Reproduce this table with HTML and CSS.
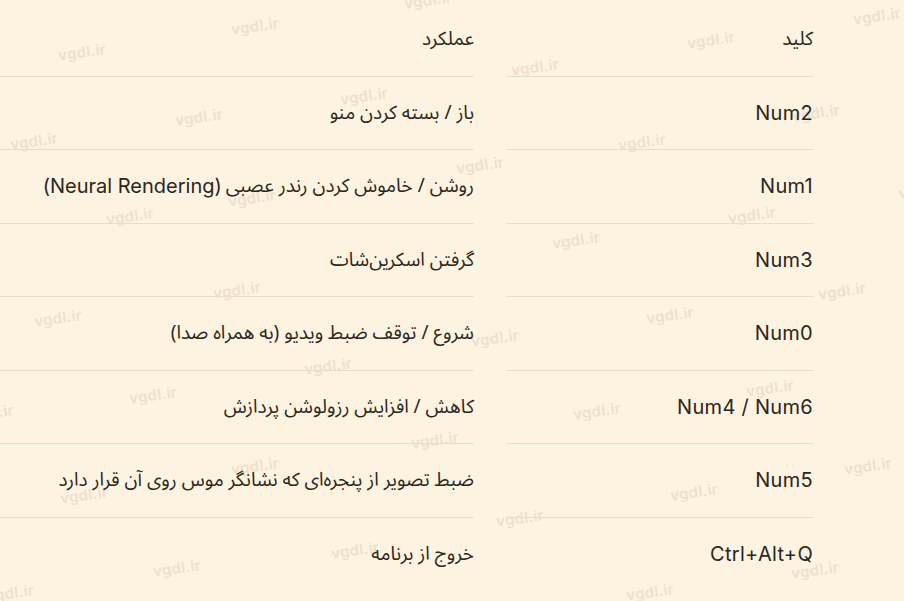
FILE: index.html
```html
<!DOCTYPE html>
<html lang="fa" dir="rtl">
<head>
<meta charset="utf-8">
<title>کلیدهای میانبر</title>
<link rel="stylesheet" href="styles.css">
</head>
<body>
<main class="page">
  <div class="table">
    <div class="row">
      <div class="cell key fa">کلید</div>
      <div class="cell fn fa">عملکرد</div>
    </div>
    <div class="row">
      <div class="cell key">Num2</div>
      <div class="cell fn fa">باز / بسته کردن منو</div>
    </div>
    <div class="row">
      <div class="cell key">Num1</div>
      <div class="cell fn fa">روشن / خاموش کردن رندر عصبی <span class="latin" lang="en">(Neural Rendering)</span></div>
    </div>
    <div class="row">
      <div class="cell key">Num3</div>
      <div class="cell fn fa">گرفتن اسکرین‌شات</div>
    </div>
    <div class="row">
      <div class="cell key">Num0</div>
      <div class="cell fn fa">شروع / توقف ضبط ویدیو (به همراه صدا)</div>
    </div>
    <div class="row">
      <div class="cell key">Num4 / Num6</div>
      <div class="cell fn fa">کاهش / افزایش رزولوشن پردازش</div>
    </div>
    <div class="row">
      <div class="cell key">Num5</div>
      <div class="cell fn fa">ضبط تصویر از پنجره‌ای که نشانگر موس روی آن قرار دارد</div>
    </div>
    <div class="row last">
      <div class="cell key">Ctrl+Alt+Q</div>
      <div class="cell fn fa">خروج از برنامه</div>
    </div>
  </div>
  <div class="watermarks" aria-hidden="true">
    <span class="wm w1">vgdl.ir</span><span class="wm w2">vgdl.ir</span><span class="wm w3">vgdl.ir</span><span class="wm w4">vgdl.ir</span><span class="wm w5">vgdl.ir</span><span class="wm w6">vgdl.ir</span><span class="wm w7">vgdl.ir</span><span class="wm w8">vgdl.ir</span><span class="wm w9">vgdl.ir</span><span class="wm w10">vgdl.ir</span><span class="wm w11">vgdl.ir</span><span class="wm w12">vgdl.ir</span><span class="wm w13">vgdl.ir</span><span class="wm w14">vgdl.ir</span><span class="wm w15">vgdl.ir</span><span class="wm w16">vgdl.ir</span><span class="wm w17">vgdl.ir</span><span class="wm w18">vgdl.ir</span><span class="wm w19">vgdl.ir</span><span class="wm w20">vgdl.ir</span><span class="wm w21">vgdl.ir</span><span class="wm w22">vgdl.ir</span><span class="wm w23">vgdl.ir</span><span class="wm w24">vgdl.ir</span><span class="wm w25">vgdl.ir</span><span class="wm w26">vgdl.ir</span><span class="wm w27">vgdl.ir</span><span class="wm w28">vgdl.ir</span><span class="wm w29">vgdl.ir</span><span class="wm w30">vgdl.ir</span><span class="wm w31">vgdl.ir</span><span class="wm w32">vgdl.ir</span><span class="wm w33">vgdl.ir</span><span class="wm w34">vgdl.ir</span><span class="wm w35">vgdl.ir</span><span class="wm w36">vgdl.ir</span><span class="wm w37">vgdl.ir</span><span class="wm w38">vgdl.ir</span>
  </div>
</main>
</body>
</html>
```
FILE: styles.css
```css
html, body {
  margin: 0;
  padding: 0;
  background: #fdf3e1;
  overflow: hidden;
}

.page {
  position: relative;
  width: 904px;
  height: 601px;
  box-sizing: border-box;
  padding: 3px 91px 0 0;
  color: #2b2620;
  font-family: "Inter", "Noto Sans", sans-serif;
}

.table {
  position: relative;
  z-index: 1;
  display: flex;
  flex-direction: column;
}

.row {
  display: grid;
  grid-template-columns: 306px 1fr;
  column-gap: 33px;
}

.cell {
  height: 72.5px;
  display: flex;
  align-items: center;
  border-bottom: 1px solid #ebdcc7;
  white-space: nowrap;
}

.row.last .cell {
  border-bottom-color: transparent;
}

.key {
  font-size: 20px;
  letter-spacing: 0.3px;
}

.fa {
  font-family: "Noto Sans Arabic", "DejaVu Sans", "Noto Sans", sans-serif;
  font-size: 19px;
}

.latin {
  font-family: "Inter", "Noto Sans", sans-serif;
  font-size: 20px;
  margin-right: 4px;
}

.watermarks {
  position: absolute;
  inset: 0;
  z-index: 0;
  overflow: hidden;
  pointer-events: none;
}

.wm {
  position: absolute;
  transform: translate(-50%, -50%) rotate(-8deg);
  font-family: "Inter", "Liberation Sans", sans-serif;
  font-weight: 600;
  font-size: 15px;
  letter-spacing: 0.3px;
  color: #eee0cd;
  direction: ltr;
}

.w1 { left: 428px; top: 0px; }
.w2 { left: 877px; top: 16px; }
.w3 { left: 82px; top: 52px; }
.w4 { left: 255px; top: 26px; }
.w5 { left: 711px; top: 40px; }
.w6 { left: 535px; top: 67px; }
.w7 { left: 199px; top: 117px; }
.w8 { left: 34px; top: 141px; }
.w9 { left: 816px; top: 113px; }
.w10 { left: 480px; top: 165px; }
.w11 { left: 130px; top: 216px; }
.w12 { left: 752px; top: 215px; }
.w13 { left: 922px; top: 190px; }
.w14 { left: 576px; top: 240px; }
.w15 { left: 670px; top: 315px; }
.w16 { left: 842px; top: 291px; }
.w17 { left: 495px; top: 338px; }
.w18 { left: 237px; top: 290px; }
.w19 { left: 58px; top: 318px; }
.w20 { left: 328px; top: 366px; }
.w21 { left: 153px; top: 395px; }
.w22 { left: -10px; top: 413px; }
.w23 { left: 770px; top: 388px; }
.w24 { left: 597px; top: 411px; }
.w25 { left: 255px; top: 466px; }
.w26 { left: 868px; top: 466px; }
.w27 { left: 84px; top: 495px; }
.w28 { left: 694px; top: 492px; }
.w29 { left: 520px; top: 518px; }
.w30 { left: 355px; top: 550px; }
.w31 { left: 177px; top: 568px; }
.w32 { left: 10px; top: 593px; }
.w33 { left: 815px; top: 570px; }
.w34 { left: 650px; top: 592px; }
.w35 { left: 642px; top: 142px; }
.w36 { left: 364px; top: 96px; }
.w37 { left: 252px; top: 198px; }
.w38 { left: 435px; top: 440px; }
```
